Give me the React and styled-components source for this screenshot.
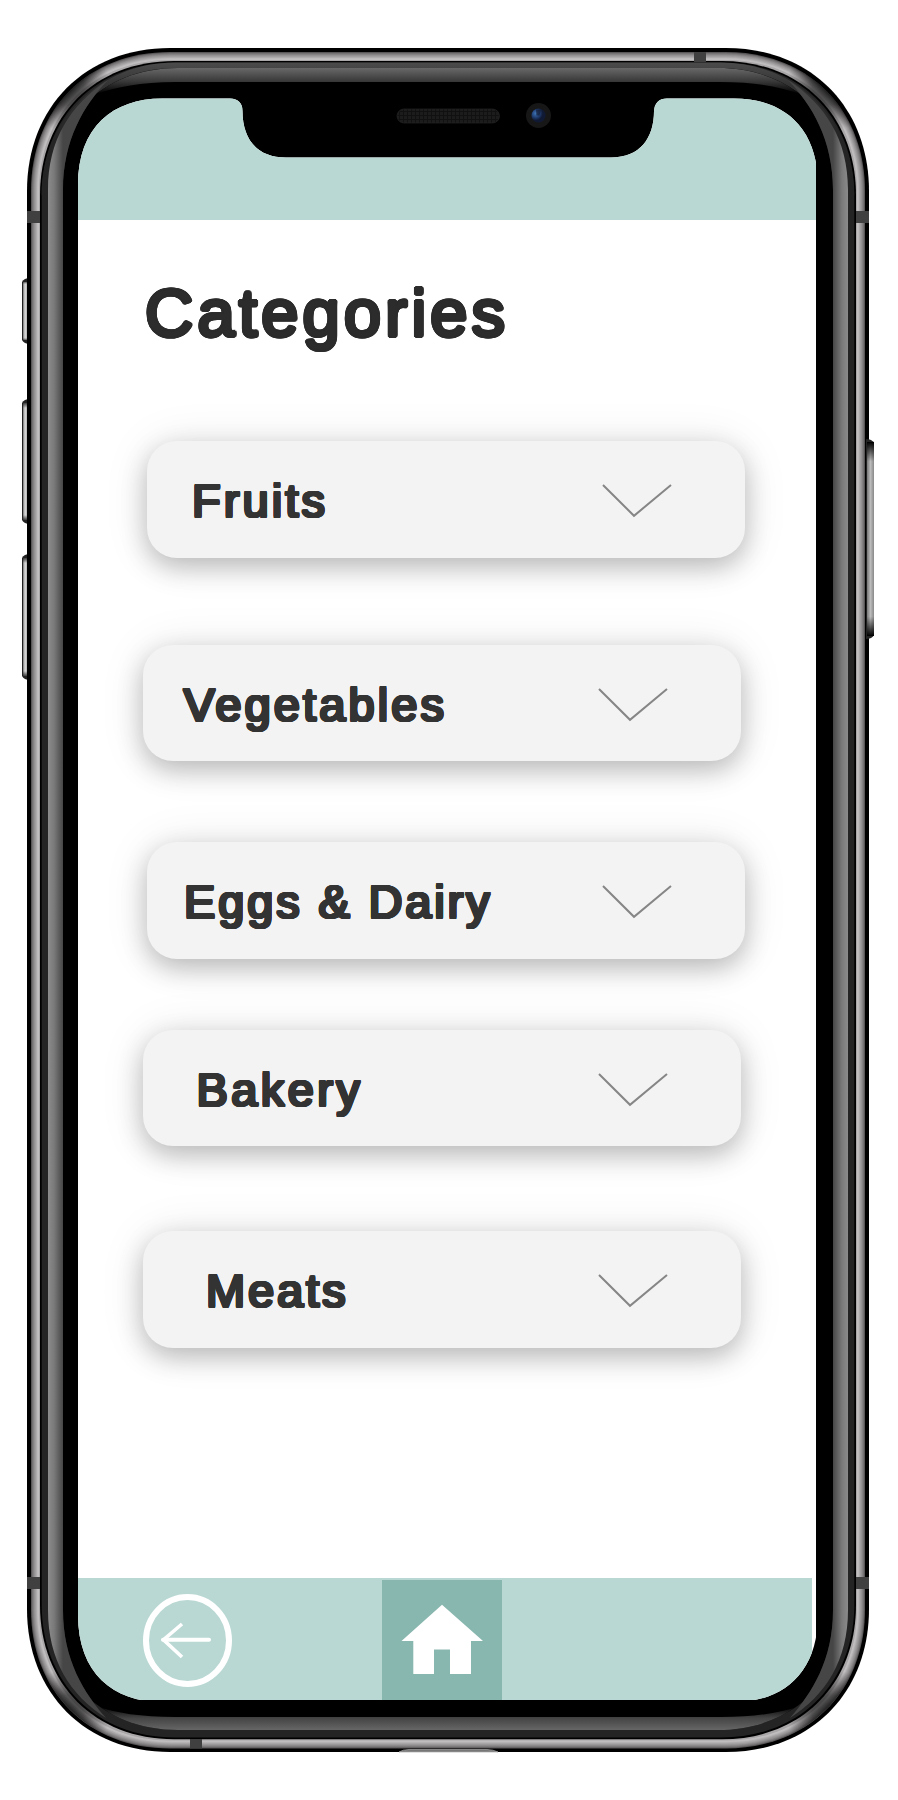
import React from "react";
import styled, { createGlobalStyle } from "styled-components";

const GlobalStyle = createGlobalStyle`
  *, *::before, *::after { box-sizing: border-box; }
  body { margin: 0; background: #fff; }
`;

const Page = styled.main`
  width: 898px;
  height: 1800px;
  overflow: hidden;
  background: #fff;
`;

const Device = styled.div`
  position: relative;
  width: 898px;
  height: 1800px;
  padding: 98px 82px 100px 78px;
`;

const FrameArt = styled.svg`
  position: absolute;
  inset: 0;
  display: block;
`;

const Screen = styled.div`
  position: relative;
  display: flex;
  flex-direction: column;
  width: 738px;
  height: 1602px;
  background: #fff;
  font-family: "Liberation Sans", Arial, sans-serif;
  clip-path: path("M0 87 C0 29 35 .4 84 .4 L152 .4 Q164.5 1 164.5 13 C164.5 40 178 59.5 208 59.5 L533 59.5 C562 59.5 576 40 576 13 Q577 .4 589 .4 L656 .4 C705 .4 740 29 740 87 L740 1517 C740 1575 705 1604 656 1604 L84 1604 C35 1604 0 1575 0 1517 Z");
`;

const StatusBar = styled.header`
  flex: none;
  height: 122.4px;
  background: #b9d8d3;
`;

const Content = styled.section`
  flex: 1;
  min-height: 0;
  padding: 53px 0 0 65px;
`;

// Thickens glyphs evenly in every direction, which rounds their corners.
const roundWeight = (radius, color) =>
  Array.from({ length: 16 }, (_, i) => {
    const a = (i * Math.PI) / 8;
    return `${(Math.cos(a) * radius).toFixed(2)}px ${(Math.sin(a) * radius).toFixed(2)}px 0 ${color}`;
  }).join(", ");

const Title = styled.h1`
  margin: 0 0 88px;
  height: 80px;
  padding-left: 2px;
  font-size: 67px;
  line-height: 80px;
  font-weight: 400;
  letter-spacing: 4px;
  color: #2c2c2c;
  text-shadow: ${roundWeight(1.9, "#2c2c2c")};
  white-space: nowrap;
`;

const CategoryList = styled.div`
  display: flex;
  flex-direction: column;
`;

const CategoryCard = styled.button`
  display: flex;
  align-items: center;
  flex: none;
  width: 598px;
  height: 116.5px;
  margin: ${(p) => p.$gap}px 0 0 ${(p) => p.$shift}px;
  padding: 0 73px 0 ${(p) => p.$inset}px;
  border: 0;
  border-radius: 30px;
  background: #f3f3f3;
  box-shadow: 0 9px 26px rgba(0, 0, 0, 0.24), 0 2px 48px rgba(0, 0, 0, 0.09);
  font-family: inherit;
  text-align: left;
`;

const CategoryName = styled.span`
  flex: 1;
  padding-top: 3px;
  font-size: 47px;
  line-height: 56px;
  letter-spacing: ${(p) => p.$tracking}px;
  color: #333;
  text-shadow: ${roundWeight(1.4, "#333")};
  white-space: nowrap;
`;

const Chevron = styled.svg`
  flex: none;
  display: block;
  margin-top: 3px;
`;

const NavBar = styled.nav`
  display: flex;
  flex: none;
  width: 734px;
  height: 122px;
  background: #b9d8d3;
`;

const NavButton = styled.button`
  display: flex;
  align-items: flex-start;
  border: 0;
  svg { display: block; flex: none; }
`;

const BackButton = styled(NavButton)`
  width: 304px;
  padding: 16px 0 0 65px;
  background: none;
`;

const HomeButton = styled(NavButton)`
  width: 120px;
  height: 120px;
  margin-top: 2px;
  padding: 24px 0 0 19px;
  background: #88b7af;
`;

const categories = [
  { name: "Fruits", gap: 0, shift: 4, inset: 45, tracking: 3.1 },
  { name: "Vegetables", gap: 87, shift: 0, inset: 40.5, tracking: 3.1 },
  { name: "Eggs & Dairy", gap: 81, shift: 4, inset: 37, tracking: 2.85 },
  { name: "Bakery", gap: 71, shift: 0, inset: 53.5, tracking: 3.4 },
  { name: "Meats", gap: 85, shift: 0, inset: 63, tracking: 2.9 },
];

// Continuous-curvature rounded rectangle.
function shell(x0, y0, x1, y1, r, k = 0.59) {
  const c = r * (1 - k);
  return `M${x0} ${y0 + r}C${x0} ${y0 + c} ${x0 + c} ${y0} ${x0 + r} ${y0}H${x1 - r}C${x1 - c} ${y0} ${x1} ${y0 + c} ${x1} ${y0 + r}V${y1 - r}C${x1} ${y1 - c} ${x1 - c} ${y1} ${x1 - r} ${y1}H${x0 + r}C${x0 + c} ${y1} ${x0} ${y1 - c} ${x0} ${y1 - r}Z`;
}

const metal = ["#5a5758", "#757273", "#858283", "#959293", "#a19e9f", "#aeabac", "#bdbabb", "#c2bfc0", "#aaa7a8"];

function SideKey({ x, y, height, right }) {
  return (
    <g>
      <path
        d={right
          ? `M${x} ${y}q6 0 8 4v${height - 8}q-2 4-8 4Z`
          : `M${x + 8} ${y}q-6 0-8 4v${height - 8}q2 4 8 4Z`}
        fill="#222"
      />
      <rect x={x + 1} y={y + 4} width={right ? 7 : 6} height={height - 8} fill={right ? "url(#keyRight)" : "url(#keyLeft)"} />
      <rect x={x + 1} y={y + 3} width={right ? 7 : 6} height={height - 6} fill={right ? "url(#keyEndsDeep)" : "url(#keyEnds)"} />
    </g>
  );
}

function DeviceFrame() {
  const crescent = "M48 190C48 140 70 105 108 80C84 105 63 140 63 190V1610C63 1660 84 1693 106 1718C70 1695 48 1660 48 1610Z";
  return (
    <FrameArt width="898" height="1800" viewBox="0 0 898 1800" aria-hidden="true">
      <defs>
        <linearGradient id="edge" x1="48" x2="63" y1="0" y2="0" gradientUnits="userSpaceOnUse">
          <stop stopColor="#8b8b8b" /><stop offset=".4" stopColor="#7a7a7a" /><stop offset="1" stopColor="#464646" />
        </linearGradient>
        <linearGradient id="topBevel" x1="0" x2="0" y1="68" y2="94" gradientUnits="userSpaceOnUse">
          <stop stopColor="#686868" /><stop offset=".5" stopColor="#3a3a3a" /><stop offset="1" stopColor="#000" />
        </linearGradient>
        <linearGradient id="bottomBevel" x1="0" x2="0" y1="1706" y2="1730" gradientUnits="userSpaceOnUse">
          <stop stopColor="#000" /><stop offset=".5" stopColor="#444" /><stop offset="1" stopColor="#666" />
        </linearGradient>
        <linearGradient id="topGroove" x1="0" x2="0" y1="62" y2="140" gradientUnits="userSpaceOnUse">
          <stop stopColor="#4c4c4c" /><stop offset=".3" stopColor="#333" /><stop offset="1" stopColor="#242424" />
        </linearGradient>
        <linearGradient id="keyLeft"><stop stopColor="#777" /><stop offset=".35" stopColor="#ddd" /><stop offset="1" stopColor="#888" /></linearGradient>
        <linearGradient id="keyRight"><stop stopColor="#777" /><stop offset=".5" stopColor="#bbb" /><stop offset="1" stopColor="#888" /></linearGradient>
        <linearGradient id="keyEnds" x1="0" x2="0" y1="0" y2="1">
          <stop stopColor="#222" /><stop offset=".05" stopColor="#222" stopOpacity="0" /><stop offset=".95" stopColor="#222" stopOpacity="0" /><stop offset="1" stopColor="#222" />
        </linearGradient>
        <linearGradient id="keyEndsDeep" x1="0" x2="0" y1="0" y2="1">
          <stop stopColor="#000" /><stop offset=".1" stopColor="#000" stopOpacity="0" /><stop offset=".9" stopColor="#000" stopOpacity="0" /><stop offset="1" stopColor="#000" />
        </linearGradient>
        <radialGradient id="cornerShade">
          <stop stopColor="#000" stopOpacity=".7" /><stop offset=".4" stopColor="#000" stopOpacity=".55" /><stop offset="1" stopColor="#000" stopOpacity="0" />
        </radialGradient>
        <radialGradient id="lens" cx=".3" cy=".35">
          <stop stopColor="#3f75b5" /><stop offset=".5" stopColor="#24457c" /><stop offset="1" stopColor="#101a35" />
        </radialGradient>
        <pattern id="mesh" width="4" height="4" patternUnits="userSpaceOnUse">
          <rect width="4" height="4" fill="#111" /><rect width="3" height="3" fill="#1c1c1c" />
        </pattern>
        <clipPath id="shellClip"><path d={shell(31, 52, 865, 1748, 139)} /></clipPath>
        <clipPath id="innerClip"><path d={shell(48, 68, 848, 1730, 130)} /></clipPath>
      </defs>

      <SideKey x={22} y={278} height={66} />
      <SideKey x={22} y={399} height={125} />
      <SideKey x={22} y={554} height={126} />

      <path d={shell(27, 48, 869, 1752, 143)} fill="#000" />
      {metal.map((color, i) => (
        <path key={i} d={shell(31 + i, 52 + i, 865 - i, 1748.5 - i, 139 - i)} fill={color} />
      ))}
      <g clipPath="url(#shellClip)">
        <circle cx="66" cy="87" r="44" fill="url(#cornerShade)" />
        <circle cx="830" cy="87" r="44" fill="url(#cornerShade)" />
        <circle cx="66" cy="1713" r="44" fill="url(#cornerShade)" />
        <circle cx="830" cy="1713" r="44" fill="url(#cornerShade)" />
      </g>
      <path d={shell(40, 61, 856, 1739.3, 134)} fill="#000" />
      <path d={shell(41.7, 62.5, 854.3, 1737.5, 133)} fill="#242424" />
      <path d="M41.7 195C42 120 100 62.5 175 62.5H721C796 62.5 854 120 854.3 195L848 195C842 105 780 68 721 68H175C116 68 54 105 48 195Z" fill="url(#topGroove)" />
      <path d={shell(48, 68, 848, 1730, 130)} fill="#000" />

      <g clipPath="url(#innerClip)">
        <path d="M48 68H848V94H800C780 87 755 82 721 82H175C141 82 116 87 96 94H48Z" fill="url(#topBevel)" />
        <path d="M48 1730H848V1706H800C780 1713 755 1717 721 1717H175C141 1717 116 1713 96 1706H48Z" fill="url(#bottomBevel)" />
        <path d="M48 62H100L108 80C84 105 63 140 63 190H48ZM848 62H796L788 80C812 105 833 140 833 190H848ZM48 1736H100L106 1718C84 1693 63 1660 63 1610H48ZM848 1736H796L790 1718C812 1693 833 1660 833 1610H848Z" fill="#242424" />
      </g>
      <path d={crescent} fill="url(#edge)" />
      <path d={crescent} transform="translate(896 0) scale(-1 1)" fill="url(#edge)" />

      <g fill="#404040">
        <rect x="27" y="211" width="13" height="12" /><rect x="856" y="211" width="13" height="12" />
        <rect x="27" y="1577" width="13" height="12" /><rect x="856" y="1577" width="13" height="12" />
        <rect x="694" y="52" width="12" height="10" /><rect x="190" y="1739" width="12" height="9.5" />
      </g>
      <path d="M399 1752Q403 1749.5 409 1749.5H487Q493 1749.5 498 1752Z" fill="#777" stroke="#aaa" strokeWidth=".7" />
      <SideKey x={866} y={439} height={200} right />

      <rect x="397" y="109" width="102.5" height="14" rx="7" fill="url(#mesh)" stroke="#242424" strokeWidth=".7" />
      <circle cx="538.5" cy="115.5" r="12.5" fill="#171717" />
      <circle cx="538.5" cy="115.5" r="7" fill="url(#lens)" />
      <path d="M536 109.5h5l-1.5 6h-3Z" fill="#151c33" opacity=".7" />
    </FrameArt>
  );
}

export default function App() {
  return (
    <Page>
      <GlobalStyle />
      <Device>
        <DeviceFrame />
        <Screen>
          <StatusBar />
          <Content>
            <Title>Categories</Title>
            <CategoryList>
              {categories.map((c) => (
                <CategoryCard key={c.name} $gap={c.gap} $shift={c.shift} $inset={c.inset}>
                  <CategoryName $tracking={c.tracking}>{c.name}</CategoryName>
                  <Chevron width="70" height="34" viewBox="0 0 70 34" fill="none">
                    <path d="M1 1L32 31.8L69 1" stroke="#868686" strokeWidth="2" />
                  </Chevron>
                </CategoryCard>
              ))}
            </CategoryList>
          </Content>
          <NavBar>
            <BackButton aria-label="Back">
              <svg width="90" height="94" viewBox="0 0 90 94" fill="none" stroke="#fff">
                <ellipse cx="44.5" cy="46.5" rx="41.5" ry="43.5" strokeWidth="6" />
                <path d="M20 45.7H66" strokeWidth="4" strokeLinecap="round" />
                <path d="M39 30L20.5 45.7L39 63" strokeWidth="3.6" />
              </svg>
            </BackButton>
            <HomeButton aria-label="Home">
              <svg width="82" height="72" viewBox="0 0 82 72">
                <path d="M41 .7L82 37H70V70H49V45.5H33V70H12.3V37H.5Z" fill="#fff" />
              </svg>
            </HomeButton>
          </NavBar>
        </Screen>
      </Device>
    </Page>
  );
}
